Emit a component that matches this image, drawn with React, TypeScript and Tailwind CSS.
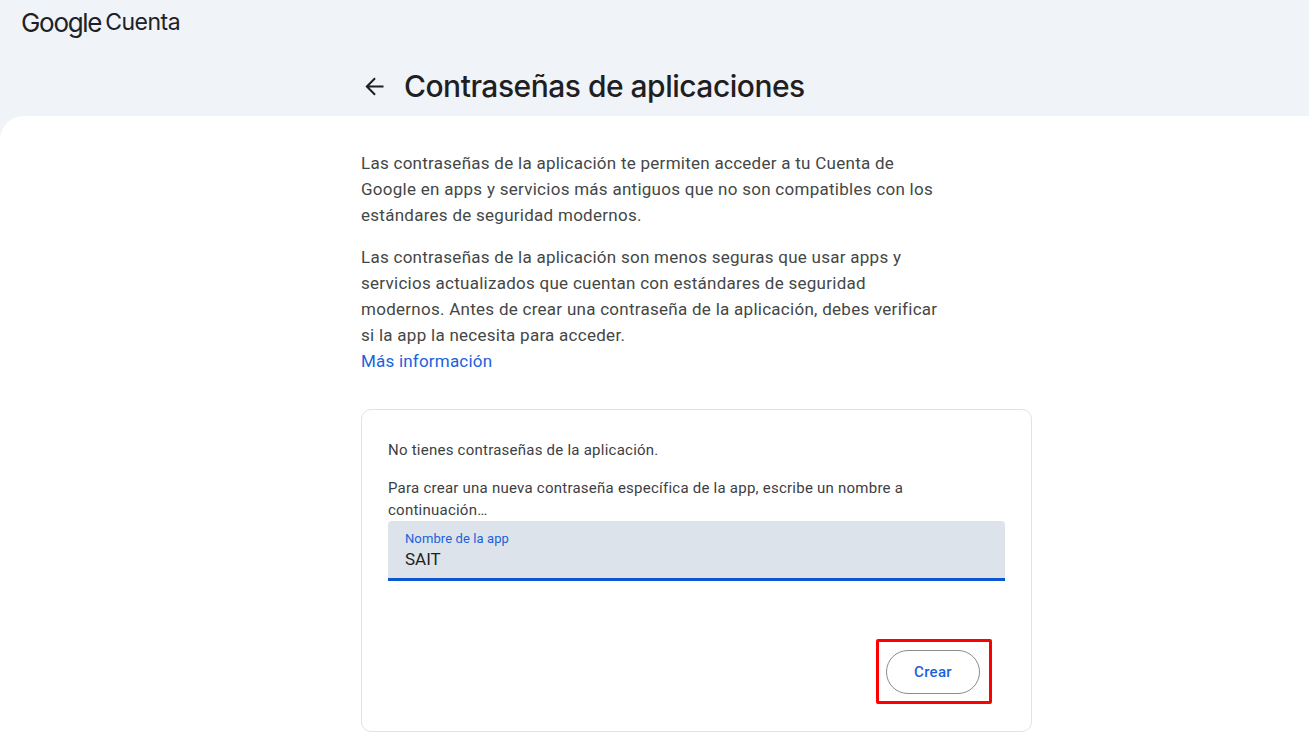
export default function App() {
  const f = { fontFamily: '"Roboto", "Noto Sans", sans-serif' };
  return (
    <div className="w-[1309px] h-[748px] overflow-hidden bg-[#f0f3f8] text-[#1f1f1f] flex flex-col" style={f}>
      <div className="h-[44px] pl-[21px] flex items-center gap-[4px] font-['Inter',sans-serif] text-[#202124]">
        <span className="text-[26px] tracking-[-1.3px]">Google</span>
        <span className="text-[23px] tracking-[-0.5px]">Cuenta</span>
      </div>
      <div className="h-[72px] pl-[361px] flex items-center gap-[16px] pt-[13px]">
        <svg width="27" height="27" viewBox="0 0 24 24" fill="none" stroke="#1f1f1f" strokeWidth="1.8"><path d="M20 12H5.5M12.5 4.7 5.2 12l7.3 7.3" /></svg>
        <h1 className="text-[30px] font-medium font-['Inter',sans-serif] tracking-[-0.5px]">Contraseñas de aplicaciones</h1>
      </div>
      <div className="flex-1 bg-white rounded-tl-[24px] pl-[361px] pt-[34px]">
        <div className="w-[585px] text-[17px] tracking-[0.27px] leading-[26px] text-[#444746]">
          <p>Las contraseñas de la aplicación te permiten acceder a tu Cuenta de Google en apps y servicios más antiguos que no son compatibles con los estándares de seguridad modernos.</p>
          <p className="mt-[16px]">Las contraseñas de la aplicación son menos seguras que usar apps y servicios actualizados que cuentan con estándares de seguridad modernos. Antes de crear una contraseña de la aplicación, debes verificar si la app la necesita para acceder.</p>
          <a className="text-[#1a62dc] block tracking-[0.2px]">Más información</a>
        </div>
        <div className="mt-[35px] w-[671px] h-[323px] border border-[#e3e3e3] rounded-[10px] px-[26px] pt-[29px] text-[15px] tracking-[0.24px] leading-[22px] text-[#3c4043]">
          <p>No tienes contraseñas de la aplicación.</p>
          <p className="mt-[16px] w-[540px]">Para crear una nueva contraseña específica de la app, escribe un nombre a continuación…</p>
          <div className="h-[60px] bg-[#dde3ea] border-b-[3px] border-[#0b57d0] px-[17px] pt-[10px] rounded-t-[4px] tracking-normal">
            <div className="text-[13px] tracking-[0.1px] leading-[16px] text-[#1a62dc]">Nombre de la app</div>
            <div className="text-[17px] leading-[25px] text-[#1f1f1f]">SAIT</div>
          </div>
          <div className="flex justify-end mt-[58px]">
            <div className="border-[3px] border-[#ff0000] rounded-[2px] w-[116px] h-[65px] flex items-center justify-center mr-[13px] pr-[2px]">
              <button className="w-[94px] h-[44px] rounded-full border border-[#8a8d8c] text-[#1a62dc] font-medium text-[15px] tracking-[0.3px]">Crear</button>
            </div>
          </div>
        </div>
      </div>
    </div>
  );
}
